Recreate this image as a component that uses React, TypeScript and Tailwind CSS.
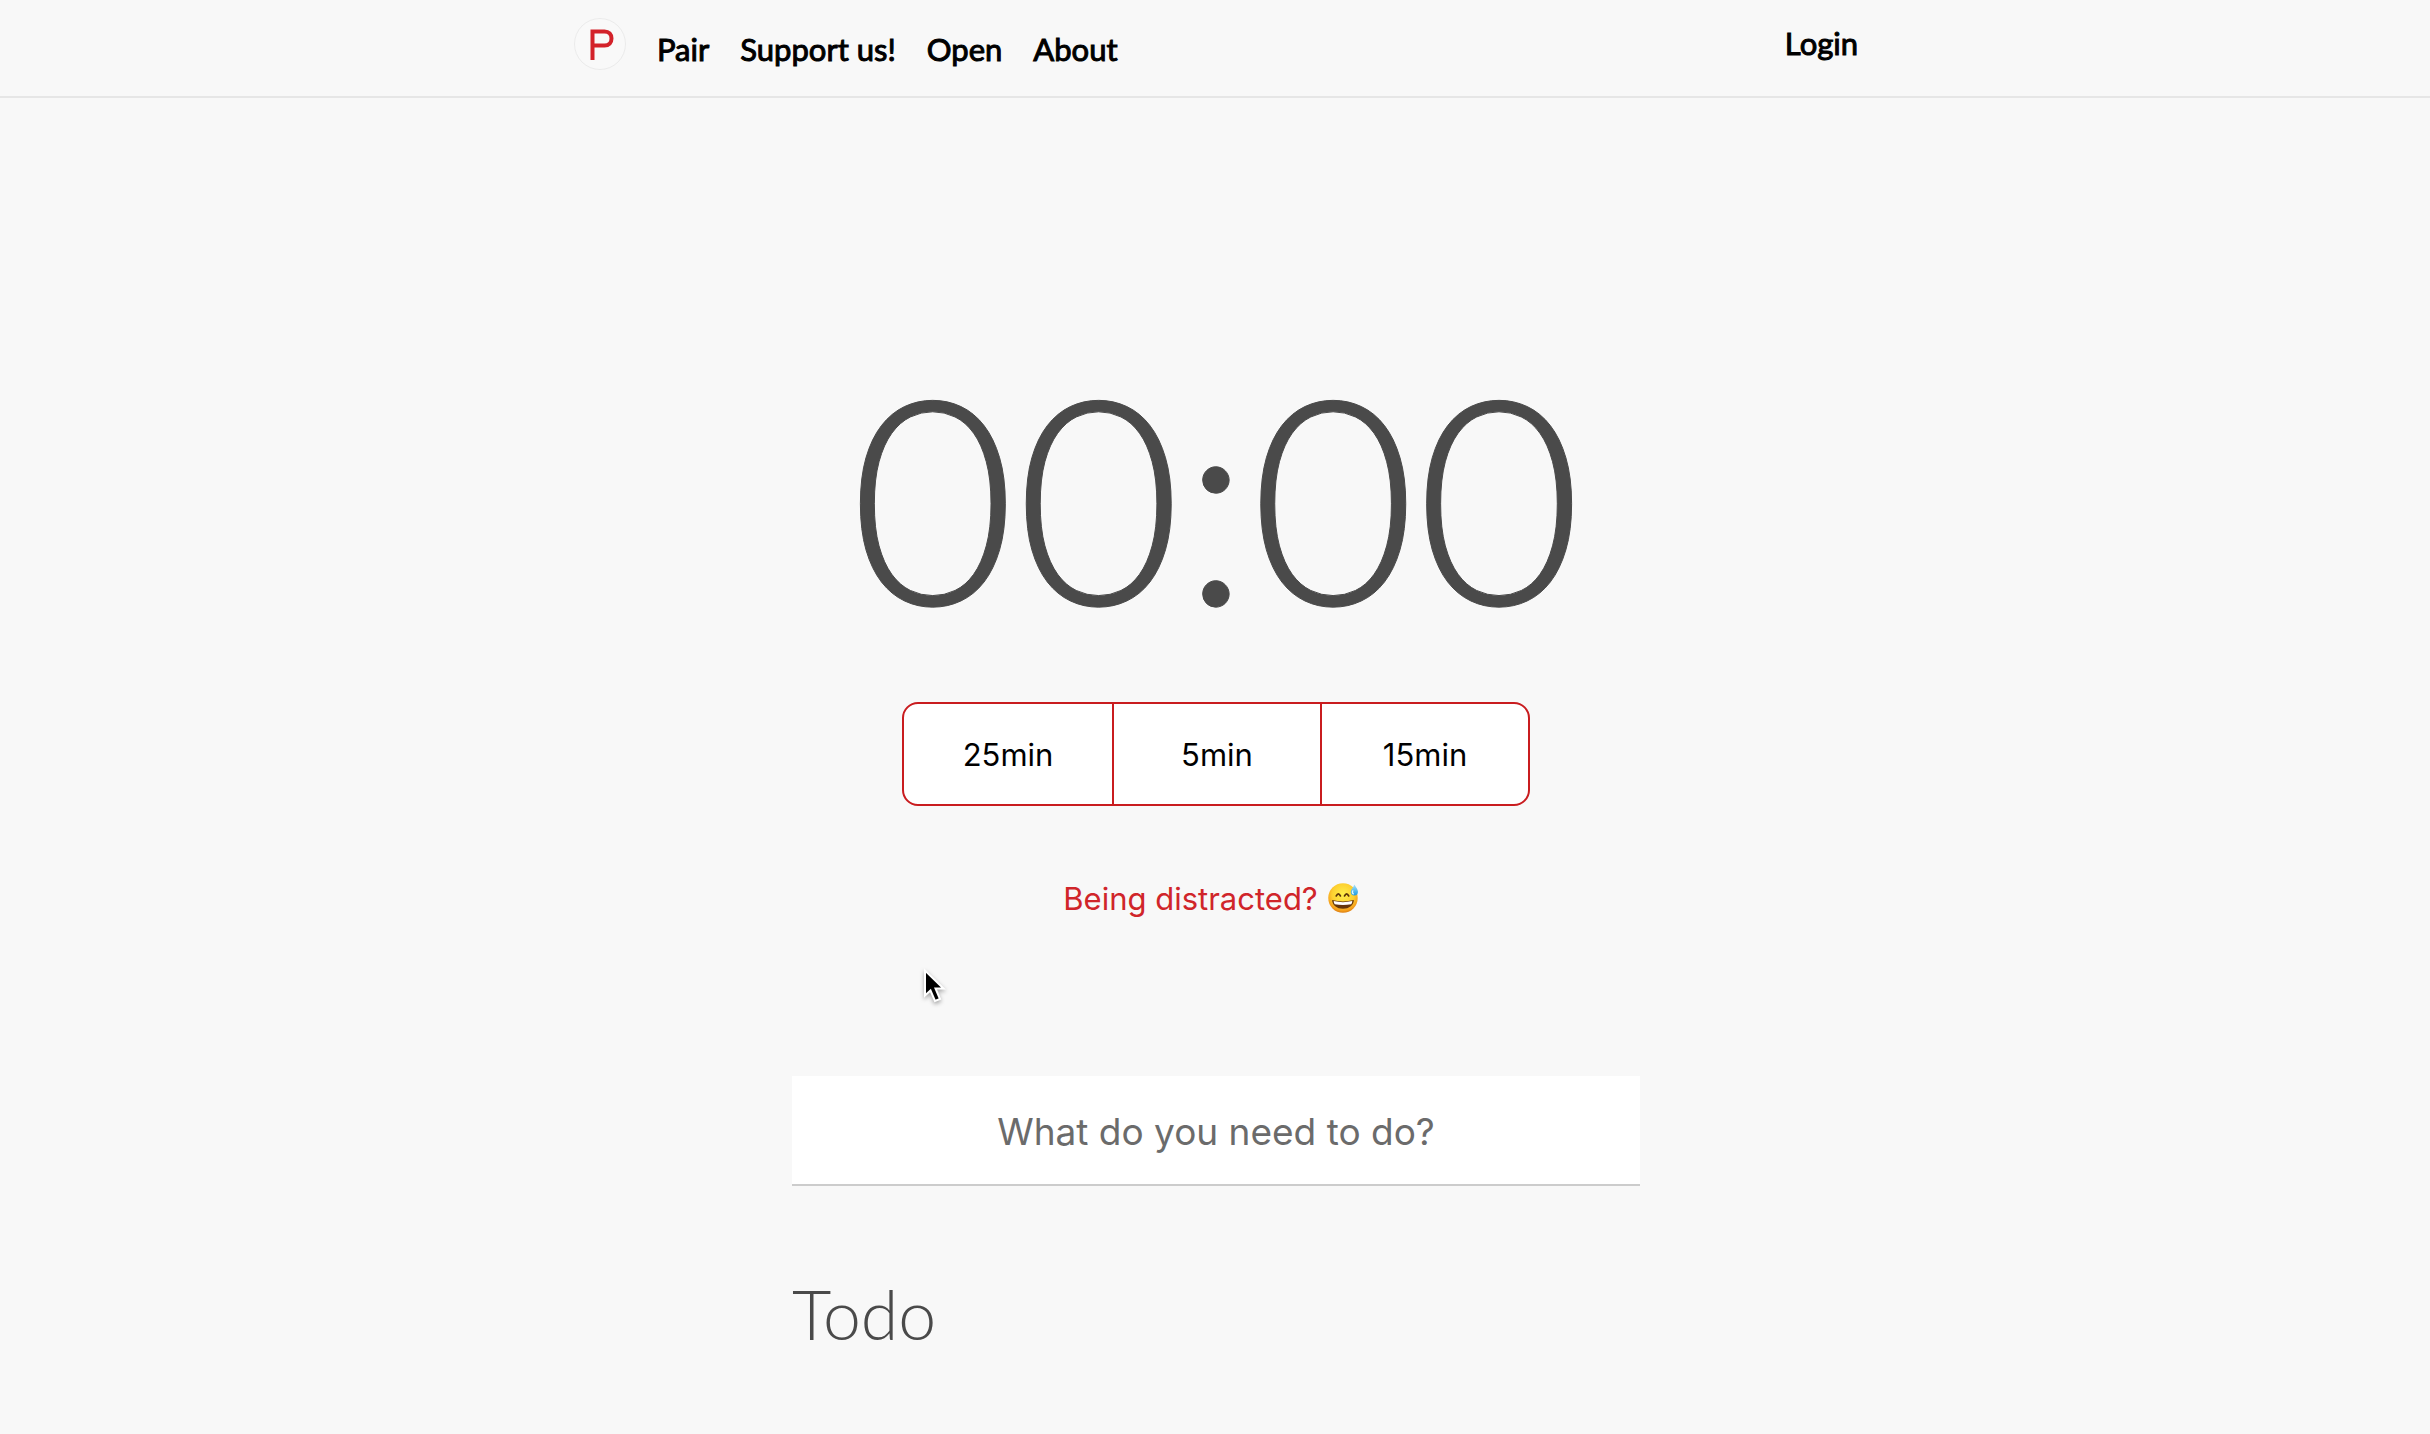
import React from "react";

const links = ["Pair", "Support us!", "Open", "About"];
const durations = ["25min", "5min", "15min"];

function Logo() {
  return (
    <a href="#home" aria-label="Home" className="block">
      <svg viewBox="0 0 52 52" className="size-13" aria-hidden="true">
        <circle cx="26" cy="26" r="25.5" fill="#f9f9f9" stroke="#ebebeb" />
        <path
          d="M18.5 42V13.5H30.5C35 13.5 37.500 16.500 37.500 20.5S35 27.5 30.5 27.5H18.5"
          fill="none"
          stroke="#d3222a"
          strokeWidth="4"
        />
      </svg>
    </a>
  );
}

function SweatSmile() {
  return (
    <svg viewBox="0 0 60 60" className="mb-1 size-[31px]" role="img" aria-label="Grinning face with sweat">
      <defs>
        <radialGradient id="face" cx="50%" cy="38%" r="62%">
          <stop offset="0" stopColor="#ffef4a" />
          <stop offset="0.6" stopColor="#fdd030" />
          <stop offset="0.88" stopColor="#f5a01c" />
          <stop offset="1" stopColor="#dc7f12" />
        </radialGradient>
        <linearGradient id="drop" x1="0" y1="0" x2="0" y2="1">
          <stop offset="0" stopColor="#a8e4fb" />
          <stop offset="1" stopColor="#1f9be0" />
        </linearGradient>
      </defs>
      <circle cx="29" cy="31" r="28.500" fill="url(#face)" />
      <path d="M16 27q4-8 8 0M32 27q4-8 8 0" fill="none" stroke="#5b3208" strokeWidth="3.4" strokeLinecap="round" />
      <path d="M8 35q21 5 42 0c0 10-9 17-21 17S8 45 8 35z" fill="#65350b" />
      <path d="M11 37q18 4 36 0q0 4-2 6q-16 3-32 0q-2-2-2-6z" fill="#fff" />
      <path d="M51 5c4 6 7 10 7 14a7 7 0 0 1-14 0c0-4 5-8 7-14z" fill="url(#drop)" />
      <path d="M48 17q-2 4 1 6" fill="none" stroke="#e4f8ff" strokeWidth="2.4" strokeLinecap="round" />
    </svg>
  );
}

function Cursor() {
  return (
    <svg
      viewBox="0 0 24 38"
      className="pointer-events-none absolute top-[967px] left-[calc(50%-292px)] h-[38px] w-6 overflow-visible drop-shadow-[0_2px_2px_rgba(0,0,0,0.35)]"
      aria-hidden="true"
    >
      <path
        d="M2 3.500V28.500L7.500 23.500L12 34L17 32L12.500 21.500H20.500Z"
        fill="#000"
        stroke="#fff"
        strokeWidth="2"
      />
    </svg>
  );
}

export default function App() {
  return (
    <div className="relative min-h-screen bg-[#f8f8f8] font-['Inter',sans-serif] text-black">
      <header className="border-b-2 border-[#e6e6e6] font-['Lato',sans-serif] text-[31px] leading-10 font-normal [-webkit-text-stroke:1px_black]">
        <div className="mx-auto flex max-w-[1286px] items-start justify-between pt-[18px] pb-[26px] pl-0.5">
          <nav className="flex items-start gap-[31px]">
            <Logo />
            <ul className="flex gap-[31px] pt-[11px]">
              {links.map((label) => (
                <li key={label}>
                  <a href={"#" + label.split(" ")[0].toLowerCase()}>{label}</a>
                </li>
              ))}
            </ul>
          </nav>
          <a href="#login" className="pt-[5px]">
            Login
          </a>
        </div>
      </header>

      <main className="mx-auto flex max-w-[850px] flex-col items-center pt-[233px] pl-0.5 text-[31px] leading-10">
        <h1 className="font-['Lato',sans-serif] text-[286px] leading-[328px] font-light text-[#4a4a4a] [-webkit-text-stroke:1px_#4a4a4a]">
          00:00
        </h1>

        <div className="mt-[43px] grid w-[628px] grid-cols-3 overflow-hidden rounded-2xl border-2 border-[#c91c1f] bg-white">
          {durations.map((d) => (
            <button key={d} type="button" className="h-[100px] border-[#c91c1f] pt-0.5 not-first:border-l-2">
              {d}
            </button>
          ))}
        </div>

        <button type="button" className="mt-[73px] mr-2.5 flex items-center gap-2.5 text-[#d0252a]">
          Being distracted?
          <SweatSmile />
        </button>

        <input
          type="text"
          aria-label="New task"
          placeholder="What do you need to do?"
          className="mt-[157px] h-[110px] w-full border-b-2 border-[#ccc] bg-white pt-0.5 text-center text-[37px] outline-none placeholder:text-[#6b6b6b]"
        />

        <h2 className="mt-[88px] w-full font-['Lato',sans-serif] text-[68px] leading-20 font-light text-[#4a4a4a]">
          Todo
        </h2>
      </main>

      <Cursor />
    </div>
  );
}
